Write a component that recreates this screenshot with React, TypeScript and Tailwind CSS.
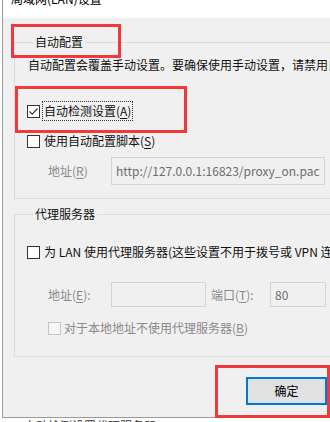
import React from "react";

const font = { fontFamily: '"Noto Sans CJK SC", "Noto Sans", sans-serif' };

function Box({ checked, disabled }: { checked?: boolean; disabled?: boolean }) {
  return (
    <span
      className={
        "flex h-[13px] w-[13px] shrink-0 items-center justify-center border " +
        (disabled ? "border-[#c4c4c4] bg-[#f7f7f7]" : "border-[#333333] bg-white")
      }
    >
      {checked && (
        <svg width="11" height="11" viewBox="0 0 11 11">
          <path d="M1.5 5.5 L4.2 8.2 L9.5 2.5" fill="none" stroke="#3a3a3a" strokeWidth="1.2" />
        </svg>
      )}
    </span>
  );
}

function U({ children }: { children: React.ReactNode }) {
  return <span className="underline underline-offset-2">{children}</span>;
}

export default function App() {
  return (
    <div className="relative h-[422px] w-[330px] overflow-hidden bg-white text-[12px] leading-[16px] text-[#111]" style={font}>
      <div className="ml-[2px] w-[340px] border-b border-l border-[#9a9a9a]">
        {/* title bar */}
        <div className="h-[18px] overflow-hidden bg-white">
          <div className="ml-[8px] mt-[-9px] whitespace-nowrap text-[12px] leading-[16px] text-black">局域网(LAN)设置</div>
        </div>
        {/* body */}
        <div className="bg-[#f0f0f0] pt-[16px] pb-[12px]">
          <fieldset className="ml-[11px] w-[330px] border border-[#dcdcdc] px-[12px] pb-[13px] pt-[7px]">
            <legend className="ml-[6px] px-[2px] leading-[16px]">自动配置</legend>
            <div className="whitespace-nowrap pl-[1px]">自动配置会覆盖手动设置。要确保使用手动设置，请禁用自动检测。</div>
            <div className="mt-[27px] flex h-[22px] items-center">
              <Box checked />
              <span className="ml-[2px] whitespace-nowrap border border-dotted border-[#333] px-[1px] leading-[18px]">
                自动检测设置(<U>A</U>)
              </span>
            </div>
            <div className="mt-[8px] flex h-[22px] items-center">
              <Box />
              <span className="ml-[4px] whitespace-nowrap">
                使用自动配置脚本(<U>S</U>)
              </span>
            </div>
            <div className="mt-[5px] flex h-[28px] items-center">
              <span className="ml-[21px] w-[63px] whitespace-nowrap text-[#8a8a8a]">
                地址(<U>R</U>)
              </span>
              <div className="flex h-[28px] w-[214px] items-center border border-[#d4d4d4] bg-[#f0f0f0] pl-[4px] text-[#6d6d6d]">
                http://127.0.0.1:16823/proxy_on.pac
              </div>
            </div>
          </fieldset>

          <fieldset className="ml-[11px] mt-[7px] w-[330px] border border-[#dcdcdc] px-[12px] pb-[17px] pt-[19px]">
            <legend className="ml-[6px] px-[2px] leading-[16px]">代理服务器</legend>
            <div className="flex h-[22px] items-center">
              <Box />
              <span className="ml-[4px] whitespace-nowrap">
                为 LAN 使用代理服务器(这些设置不用于拨号或 VPN 连接)(<U>X</U>)
              </span>
            </div>
            <div className="mt-[19px] flex h-[25px] items-center">
              <span className="ml-[21px] w-[63px] whitespace-nowrap text-[#8a8a8a]">
                地址(<U>E</U>):
              </span>
              <div className="h-[25px] w-[95px] border border-[#d4d4d4] bg-[#f0f0f0]" />
              <span className="ml-[5px] w-[59px] whitespace-nowrap text-[#8a8a8a]">
                端口(<U>T</U>):
              </span>
              <div className="flex h-[25px] w-[56px] items-center border border-[#d4d4d4] bg-[#f0f0f0] pl-[4px] text-[#6d6d6d]">
                80
              </div>
            </div>
            <div className="mt-[10px] flex h-[22px] items-center pl-[21px]">
              <Box disabled />
              <span className="ml-[3px] whitespace-nowrap text-[#8a8a8a]">
                对于本地地址不使用代理服务器(<U>B</U>)
              </span>
            </div>
          </fieldset>

          <div className="ml-[243px] mt-[20px] flex h-[28px] w-[81px] items-center justify-center border-2 border-[#0078d7] bg-[#e1e1e1] text-black">
            确定
          </div>
        </div>
      </div>
      {/* clipped text below window */}
      <div className="h-[4px] overflow-hidden">
        <div className="ml-[24px] whitespace-nowrap text-[12px] leading-[16px] text-[#333]">自动检测设置代理服务器</div>
      </div>

      {/* red annotation boxes */}
      <div className="pointer-events-none absolute left-[11px] top-[24px] h-[34px] w-[110px] border-[3px] border-[#ee3a3a]" />
      <div className="pointer-events-none absolute left-[15px] top-[86px] h-[47px] w-[172px] border-[3px] border-[#ee3a3a]" />
      <div className="pointer-events-none absolute left-[215px] top-[365px] h-[53px] w-[115px] border-[3px] border-[#ee3a3a]" />
    </div>
  );
}
